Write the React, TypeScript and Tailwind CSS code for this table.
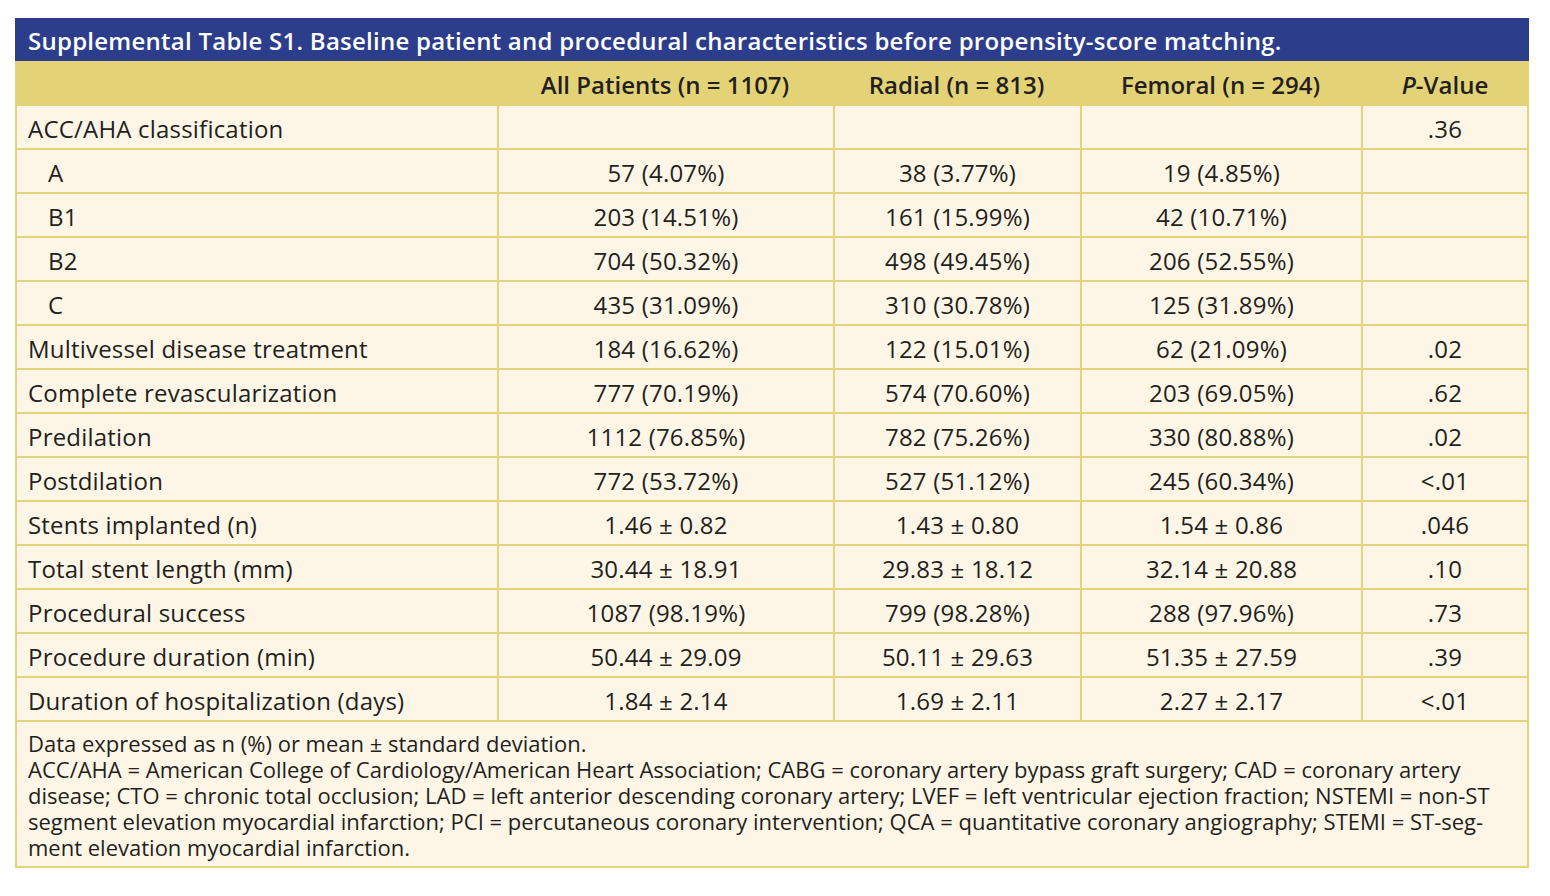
import React from "react";

type Row = {
  label: string;
  indent?: boolean;
  all: string;
  radial: string;
  femoral: string;
  p: string;
};

const rows: Row[] = [
  { label: "ACC/AHA classification", all: "", radial: "", femoral: "", p: ".36" },
  { label: "A", indent: true, all: "57 (4.07%)", radial: "38 (3.77%)", femoral: "19 (4.85%)", p: "" },
  { label: "B1", indent: true, all: "203 (14.51%)", radial: "161 (15.99%)", femoral: "42 (10.71%)", p: "" },
  { label: "B2", indent: true, all: "704 (50.32%)", radial: "498 (49.45%)", femoral: "206 (52.55%)", p: "" },
  { label: "C", indent: true, all: "435 (31.09%)", radial: "310 (30.78%)", femoral: "125 (31.89%)", p: "" },
  { label: "Multivessel disease treatment", all: "184 (16.62%)", radial: "122 (15.01%)", femoral: "62 (21.09%)", p: ".02" },
  { label: "Complete revascularization", all: "777 (70.19%)", radial: "574 (70.60%)", femoral: "203 (69.05%)", p: ".62" },
  { label: "Predilation", all: "1112 (76.85%)", radial: "782 (75.26%)", femoral: "330 (80.88%)", p: ".02" },
  { label: "Postdilation", all: "772 (53.72%)", radial: "527 (51.12%)", femoral: "245 (60.34%)", p: "<.01" },
  { label: "Stents implanted (n)", all: "1.46 ± 0.82", radial: "1.43 ± 0.80", femoral: "1.54 ± 0.86", p: ".046" },
  { label: "Total stent length (mm)", all: "30.44 ± 18.91", radial: "29.83 ± 18.12", femoral: "32.14 ± 20.88", p: ".10" },
  { label: "Procedural success", all: "1087 (98.19%)", radial: "799 (98.28%)", femoral: "288 (97.96%)", p: ".73" },
  { label: "Procedure duration (min)", all: "50.44 ± 29.09", radial: "50.11 ± 29.63", femoral: "51.35 ± 27.59", p: ".39" },
  { label: "Duration of hospitalization (days)", all: "1.84 ± 2.14", radial: "1.69 ± 2.11", femoral: "2.27 ± 2.17", p: "<.01" },
];

const cols = "grid grid-cols-[482px_336px_247px_281px_168px]";
const cell = "h-[42px] pt-[3px] flex items-center justify-center border-l-2 border-[#e5d37c]";

const notes = [
  "Data expressed as n (%) or mean ± standard deviation.",
  "ACC/AHA = American College of Cardiology/American Heart Association; CABG = coronary artery bypass graft surgery; CAD = coronary artery",
  "disease; CTO = chronic total occlusion; LAD = left anterior descending coronary artery; LVEF = left ventricular ejection fraction; NSTEMI = non-ST",
  "segment elevation myocardial infarction; PCI = percutaneous coronary intervention; QCA = quantitative coronary angiography; STEMI = ST-seg-",
  "ment elevation myocardial infarction.",
];

export default function App() {
  return (
    <div className="w-[1550px] h-[896px] bg-white pt-[18px] pl-[15px] font-['Open_Sans',sans-serif] text-[#231f20]">
      <div className="w-[1514px]">
        {/* title */}
        <div className="h-[43px] pt-[2px] bg-[#2c3d8b] flex items-center px-[13px] text-white text-[24px] tracking-[0.25px] font-semibold whitespace-nowrap">
          Supplemental Table S1. Baseline patient and procedural characteristics before propensity-score matching.
        </div>

        {/* header */}
        <div className={`${cols} h-[45px] pt-[2px] bg-[#e4d376] text-[24px] font-semibold`}>
          <div />
          <div className="flex items-center justify-center">All Patients (n = 1107)</div>
          <div className="flex items-center justify-center">Radial (n = 813)</div>
          <div className="flex items-center justify-center">Femoral (n = 294)</div>
          <div className="flex items-center justify-center">
            <span className="italic">P</span>-Value
          </div>
        </div>

        {/* body */}
        <div className="bg-[#fdf6e7] border-x-2 border-b-2 border-[#e5d37c] text-[24px] tracking-[0.2px]">
          {rows.map((r, i) => (
            <div key={i} className={`${cols} ${i > 0 ? "border-t-2 border-[#e5d37c]" : ""} -mx-[2px]`}>
              <div className={`h-[42px] pt-[3px] flex items-center ${r.indent ? "pl-[31px]" : "pl-[11px]"} border-l-2 border-[#e5d37c] whitespace-nowrap`}>
                {r.label}
              </div>
              <div className={cell}>{r.all}</div>
              <div className={cell}>{r.radial}</div>
              <div className={cell}>{r.femoral}</div>
              <div className={`${cell} border-r-2`}>{r.p}</div>
            </div>
          ))}
          <div className="border-t-2 border-[#e5d37c] px-[11px] pt-[8px] pb-[6px] text-[22px] tracking-normal leading-[26px] whitespace-nowrap">
            {notes.map((n, i) => (
              <p key={i}>{n}</p>
            ))}
          </div>
        </div>
      </div>
    </div>
  );
}
